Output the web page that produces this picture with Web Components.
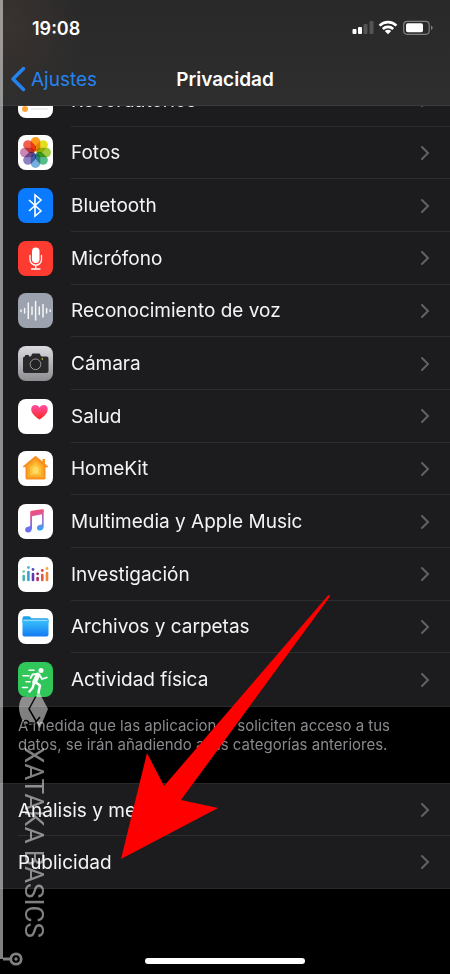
<!DOCTYPE html>
<html lang="es">
<head>
<meta charset="utf-8">
<meta name="viewport" content="width=device-width, initial-scale=1">
<title>Privacidad</title>
<style>
  body {
    margin: 0;
    background: #000;
    color: #f4f4f6;
    font-family: Inter, "Liberation Sans", sans-serif;
    font-size: 19px;
  }
</style>
</head>
<body>
<settings-screen>
  <nav-header slot="header" back="Ajustes">Privacidad</nav-header>

  <settings-list class="permissions" style="--inset: 71px">
    <settings-row>
      <svg slot="icon" viewBox="0 0 35 35"><rect width="35" height="35" rx="8" fill="#fff"/><circle cx="7" cy="26" r="3" fill="#f9a53a"/><circle cx="7" cy="17" r="3" fill="#3a8bf9"/><path d="M13 26h17M13 17h17" stroke="#ddd"/></svg>
      Recordatorios
    </settings-row>
    <settings-row>
      <svg slot="icon" viewBox="0 0 35 35">
        <rect width="35" height="35" rx="8" fill="#fff"/>
        <g style="isolation:isolate">
          <rect x="12.700" y="2" width="9.600" height="14.500" rx="4.800" fill="#fb9a1c" style="mix-blend-mode:multiply"/>
          <rect x="12.700" y="2" width="9.600" height="14.500" rx="4.800" fill="#e6dd1f" transform="rotate(45 17.5 17.5)" style="mix-blend-mode:multiply"/>
          <rect x="12.700" y="2" width="9.600" height="14.500" rx="4.800" fill="#a3cb3f" transform="rotate(90 17.5 17.5)" style="mix-blend-mode:multiply"/>
          <rect x="12.700" y="2" width="9.600" height="14.500" rx="4.800" fill="#58bd8c" transform="rotate(135 17.5 17.5)" style="mix-blend-mode:multiply"/>
          <rect x="12.700" y="2" width="9.600" height="14.500" rx="4.800" fill="#76aede" transform="rotate(180 17.5 17.5)" style="mix-blend-mode:multiply"/>
          <rect x="12.700" y="2" width="9.600" height="14.500" rx="4.800" fill="#8d83c3" transform="rotate(225 17.5 17.5)" style="mix-blend-mode:multiply"/>
          <rect x="12.700" y="2" width="9.600" height="14.500" rx="4.800" fill="#c987b4" transform="rotate(270 17.5 17.5)" style="mix-blend-mode:multiply"/>
          <rect x="12.700" y="2" width="9.600" height="14.500" rx="4.800" fill="#f0604d" transform="rotate(315 17.5 17.5)" style="mix-blend-mode:multiply"/>
        </g>
      </svg>
      Fotos
    </settings-row>
    <settings-row>
      <svg slot="icon" viewBox="0 0 35 35"><rect width="35" height="35" rx="8" fill="#0a7aff"/><path d="M11 12l12 11-6 5V7l6 5-12 11" fill="none" stroke="#fff" stroke-width="1.6"/></svg>
      Bluetooth
    </settings-row>
    <settings-row>
      <svg slot="icon" viewBox="0 0 35 35"><rect width="35" height="35" rx="8" fill="#fe3b30"/><rect x="14" y="6.500" width="7.500" height="15.500" rx="3.750" fill="#fff"/><path d="M12 14.500v4a5.750 5.750 0 0 0 11.500 0v-4M17.750 24.500v3.500M13.500 28h8.500" fill="none" stroke="#fff" stroke-width="1.300" stroke-linecap="round"/></svg>
      Micrófono
    </settings-row>
    <settings-row>
      <svg slot="icon" viewBox="0 0 35 35"><rect width="35" height="35" rx="8" fill="#9ca3ae"/><path d="M3 17v1.500M6.600 15.500v4.500M10.300 10v15.500M14 14v7.500M17.600 8.500v18.500M21.300 14v7.500M25 11.500v12.500M28.600 15.500v4.500M32.200 17v1.500" stroke="#f4f6f8" stroke-width="1.500" stroke-linecap="round"/></svg>
      Reconocimiento de voz
    </settings-row>
    <settings-row>
      <svg slot="icon" viewBox="0 0 35 35">
        <defs><linearGradient id="steel" x2="0" y2="1"><stop stop-color="#dcdbe0"/><stop offset="1" stop-color="#8d8c91"/></linearGradient></defs>
        <rect width="35" height="35" rx="8" fill="url(#steel)"/>
        <path d="M7 10.500v-.800q0-.700.700-.700h2.600q.700 0 .700.700v.800h1.200q.800 0 1.100-.800l.500-1.300q.300-.900 1.200-.900h6q.900 0 1.200.900l.500 1.300q.300.800 1.100.800H28.500q2 0 2 2v12.500q0 2-2 2H7q-2 0-2-2V12.500q0-2 2-2z" fill="#29292b"/>
        <circle cx="17.500" cy="18.300" r="5.300" fill="#222224" stroke="#9a9a96" stroke-width="1"/>
        <circle cx="24.300" cy="13" r=".8" fill="#f4cf2e"/>
      </svg>
      Cámara
    </settings-row>
    <settings-row>
      <svg slot="icon" viewBox="0 0 35 35">
        <defs><linearGradient id="heart" x2="0" y2="1"><stop stop-color="#fd50a5"/><stop offset="1" stop-color="#fb2721"/></linearGradient></defs>
        <rect width="35" height="35" rx="8" fill="#fff"/>
        <path d="M21.500 20.500C17 17.500 13.200 14.300 13.200 10.200 13.200 7.600 15 6 17.200 6c1.900 0 3.400 1 4.300 2.700C22.400 7 23.900 6 25.700 6c2.300 0 4 1.600 4 4.200 0 4.100-3.700 7.300-8.200 10.300z" fill="url(#heart)"/>
      </svg>
      Salud
    </settings-row>
    <settings-row>
      <svg slot="icon" viewBox="0 0 35 35">
        <rect width="35" height="35" rx="8" fill="#fff"/>
        <path d="M17.500 4.700L5 15.200v1h2.500V27q0 1.500 1.500 1.500h17q1.500 0 1.500-1.500V16.200H30v-1l-3-2.500V8h-2.500v2.600z" fill="#f98f1d"/>
        <path d="M17.500 8L9.500 14.500V26.500h16V14.500z" fill="#fba927"/>
        <path d="M17.500 11.500L12 16v8.500h11V16z" fill="#fdc23c"/>
        <path d="M17.500 15l-3 2.400v5h6v-5z" fill="#ffdb63"/>
      </svg>
      HomeKit
    </settings-row>
    <settings-row>
      <svg slot="icon" viewBox="0 0 35 35">
        <defs><linearGradient id="note" x1=".3" y1="0" x2=".5" y2="1"><stop stop-color="#fb4e6b"/><stop offset=".35" stop-color="#d957a0"/><stop offset=".7" stop-color="#7a70ea"/><stop offset="1" stop-color="#5c6df4"/></linearGradient>
        <linearGradient id="stem" x2="0" y2="1"><stop stop-color="#f64f75"/><stop offset=".5" stop-color="#9d73d8"/><stop offset="1" stop-color="#2ba8f8"/></linearGradient></defs>
        <rect width="35" height="35" rx="8" fill="#fff"/>
        <path d="M12.200 8.500q0-1.400 1.300-1.700L24 5.200q1.700-.300 1.700 1.200l-1.500 3.800-10.200 2v11.600c0 2.900-1.500 4.700-3.800 4.700-1.900 0-3.100-1.100-3.100-2.700 0-1.700 1.200-2.800 2.900-3.100 1.500-.300 2.200-.500 2.200-1.700z" fill="url(#note)"/>
        <path d="M24 5.600l1.700.200v16.400c0 2.800-1.500 4.400-3.800 4.400-1.900 0-3-1.100-3-2.700 0-1.700 1.200-2.700 2.800-3 1.500-.300 2.300-.500 2.300-1.700z" fill="url(#stem)"/>
      </svg>
      Multimedia y Apple Music
    </settings-row>
    <settings-row>
      <svg slot="icon" viewBox="0 0 35 35">
        <rect width="35" height="35" rx="8" fill="#fff"/>
        <g stroke-width="2.600" stroke-linecap="round">
          <path d="M5.700 19v4" stroke="#4eb6a5"/><path d="M10.400 15v8" stroke="#3d9fd6"/><path d="M15 17v6" stroke="#6238b0"/><path d="M19.600 21v2" stroke="#b02a65"/><path d="M24.300 18v5" stroke="#e15a3d"/><path d="M29 16v7" stroke="#ee8434"/>
        </g>
        <circle cx="5.700" cy="14.500" r="1.300" fill="#68c796"/><circle cx="10.400" cy="10.500" r="1.400" fill="#4ab7e4"/><circle cx="15" cy="12.500" r="1.400" fill="#4d4fc5"/><circle cx="19.600" cy="16.800" r="1.400" fill="#8f2365"/><circle cx="24.300" cy="13.500" r="1.400" fill="#d3454a"/><circle cx="29" cy="11.500" r="1.400" fill="#f6ac39"/>
      </svg>
      Investigación
    </settings-row>
    <settings-row>
      <svg slot="icon" viewBox="0 0 35 35">
        <defs><linearGradient id="folder" x2="0" y2="1"><stop stop-color="#39c1fb"/><stop offset="1" stop-color="#147bf3"/></linearGradient></defs>
        <rect width="35" height="35" rx="8" fill="#fff"/>
        <path d="M4.500 9q0-1.700 1.700-1.700h4.600q1 0 1.600.7l.6.700q.4.500 1.200.500H29q1.500 0 1.500 1.500V14h-26z" fill="#20a0e8"/>
        <path d="M4.500 11h26v14.500q0 2-2 2h-22q-2 0-2-2z" fill="url(#folder)"/>
        <path d="M5.500 11.200h24" stroke="#c6ecff" stroke-width=".9"/>
      </svg>
      Archivos y carpetas
    </settings-row>
    <settings-row>
      <svg slot="icon" viewBox="0 0 35 35">
        <rect width="35" height="35" rx="8" fill="#30c659"/>
        <circle cx="23" cy="8.500" r="2.500" fill="#fff"/>
        <g fill="none" stroke="#fff" stroke-linecap="round" stroke-linejoin="round">
          <path d="M20 13l-3.500 7" stroke-width="4.600"/>
          <path d="M19 12l-4.500.5-2 3.500M21.500 13l2.500 4 4.800-1.500" stroke-width="1.800"/>
          <path d="M18 20.500l4 3-1.500 7M16 21l-1.500 5-3 3.500" stroke-width="2.500"/>
          <path d="M11 8.300h5M5 13.800h6M8 19.700h4M4.500 25.500h5" stroke-width="1.500"/>
        </g>
      </svg>
      Actividad física
    </settings-row>
  </settings-list>

  <group-note>A medida que las aplicaciones soliciten acceso a tus datos, se irán añadiendo a las categorías anteriores.</group-note>

  <settings-list style="--inset: 18px">
    <settings-row>Análisis y mejoras</settings-row>
    <settings-row>Publicidad</settings-row>
  </settings-list>

  <home-indicator></home-indicator>

  <brand-mark slot="overlay">XATAKA BASICS</brand-mark>
  <callout-arrow slot="overlay"></callout-arrow>
</settings-screen>

<script>
class SettingsScreen extends HTMLElement {
  constructor() {
    super();
    this.attachShadow({mode: 'open'}).innerHTML = `
      <style>
        :host {
          display: flex;
          flex-direction: column;
          position: relative;
          min-height: 100vh;
          overflow: hidden;
        }
        main {
          flex: 1;
          display: flex;
          flex-direction: column;
          /* the list is scrolled partly under the header */
          margin-top: -33px;
        }
        ::slotted(.permissions) {
          flex: 1;
        }
      </style>
      <slot name="header"></slot>
      <main><slot></slot></main>
      <slot name="overlay"></slot>
    `;
  }
}

class StatusBar extends HTMLElement {
  constructor() {
    super();
    this.attachShadow({mode: 'open'}).innerHTML = `
      <style>
        :host {
          display: flex;
          align-items: center;
          justify-content: space-between;
          height: 56px;
          padding: 0 16px 0 32px;
          color: #fff;
          font-size: 18px;
          font-weight: 600;
        }
        svg {
          display: block;
        }
      </style>
      <time><slot></slot></time>
      <svg width="82" height="16" viewBox="0 0 82 16" aria-hidden="true">
        <rect x="0.500" y="9" width="4" height="5" rx="1" fill="#fff"/>
        <rect x="6" y="7" width="4" height="7" rx="1" fill="#fff"/>
        <rect x="11.500" y="4" width="4" height="10" rx="1" fill="#555556"/>
        <rect x="17.500" y="1" width="4" height="13" rx="1" fill="#555556"/>
        <g fill="none" stroke="#fff" stroke-width="2.600">
          <path d="M27.600 5.600a12 12 0 0 1 16.800 0"/>
          <path d="M30.800 9a7.500 7.500 0 0 1 10.400 0"/>
        </g>
        <path d="M36 14.300l-3.200-3.200a4.500 4.500 0 0 1 6.400 0z" fill="#fff"/>
        <rect x="51.700" y="1.300" width="25.500" height="13" rx="3.500" fill="none" stroke="#808081" stroke-width="1.200"/>
        <rect x="54" y="3.300" width="17" height="9" rx="1.800" fill="#fff"/>
        <path d="M79 5.500q1.700.800 1.700 2.300T79 10z" fill="#808081"/>
      </svg>
    `;
  }
}

class NavHeader extends HTMLElement {
  constructor() {
    super();
    this.attachShadow({mode: 'open'}).innerHTML = `
      <style>
        :host {
          display: block;
          position: relative;
          z-index: 1;
          box-sizing: border-box;
          height: 106px;
          background:
            radial-gradient(circle at 0 24px, #3b3330, transparent 84px),
            linear-gradient(#292929, #2e2e2e);
          border-bottom: 1px solid #3a3a3b;
        }
        nav {
          display: grid;
          grid-template-columns: 1fr auto 1fr;
          align-items: center;
          height: 46px;
          padding: 0 10px;
        }
        a {
          display: flex;
          align-items: center;
          gap: 5px;
          color: #2583ee;
          text-decoration: none;
        }
        h1 {
          margin: 0;
          color: #fff;
          font-size: 19px;
          font-weight: 600;
        }
      </style>
      <status-bar>19:08</status-bar>
      <nav>
        <a href="#"><svg width="16" height="26" viewBox="0 0 16 26" aria-hidden="true"><path d="M13.500 2.500L3 13l10.500 10.500" fill="none" stroke="currentColor" stroke-width="3.500" stroke-linecap="round" stroke-linejoin="round"/></svg><span>${this.getAttribute('back')}</span></a>
        <h1><slot></slot></h1>
      </nav>
    `;
  }
}

class SettingsList extends HTMLElement {
  constructor() {
    super();
    this.attachShadow({mode: 'open'}).innerHTML = `
      <style>
        :host {
          display: grid;
          grid-auto-rows: 1fr;
          background: #1c1c1e;
          border: solid #29292b;
          border-width: 1px 0;
        }
        ::slotted(:last-child) {
          --line: transparent;
        }
      </style>
      <slot></slot>
    `;
  }
}

class SettingsRow extends HTMLElement {
  constructor() {
    super();
    this.attachShadow({mode: 'open'}).innerHTML = `
      <style>
        :host {
          display: block;
          min-height: 52px;
        }
        a {
          display: flex;
          align-items: center;
          gap: 18px;
          box-sizing: border-box;
          height: 100%;
          padding: 0 20px 0 18px;
          background: linear-gradient(var(--line, #2d2d2f) 0 0) var(--inset) 100% / 100% 1px no-repeat;
          color: inherit;
          text-decoration: none;
        }
        ::slotted(svg) {
          flex: none;
          width: 35px;
          height: 35px;
        }
        span {
          flex: 1;
        }
      </style>
      <a href="#">
        <slot name="icon"></slot>
        <span><slot></slot></span>
        <svg width="10" height="16" viewBox="0 0 10 16" aria-hidden="true"><path d="M2 2l6 6-6 6" fill="none" stroke="#626266" stroke-width="2" stroke-linecap="round"/></svg>
      </a>
    `;
  }
}

class GroupNote extends HTMLElement {
  constructor() {
    super();
    this.attachShadow({mode: 'open'}).innerHTML = `
      <style>
        :host {
          display: block;
          padding: 9px 36px 29px 18px;
          color: #8a8a8e;
        }
        p {
          margin: 0;
          font-size: 15px;
          line-height: 19px;
        }
      </style>
      <p><slot></slot></p>
    `;
  }
}

class HomeIndicator extends HTMLElement {
  constructor() {
    super();
    this.attachShadow({mode: 'open'}).innerHTML = `
      <style>
        :host {
          display: flex;
          justify-content: center;
          padding: 69px 0 10px;
        }
        div {
          width: 160px;
          height: 6px;
          border-radius: 3px;
          background: #fff;
        }
      </style>
      <div></div>
    `;
  }
}

class BrandMark extends HTMLElement {
  constructor() {
    super();
    this.attachShadow({mode: 'open'}).innerHTML = `
      <style>
        :host {
          position: absolute;
          inset: 0 auto 8px 0;
          z-index: 2;
          display: flex;
          flex-direction: column;
          justify-content: flex-end;
          width: 50px;
          color: #fff;
          opacity: .5;
          pointer-events: none;
        }
        .rail {
          position: absolute;
          inset: 0 auto 7px 0;
          width: 3px;
          background: currentColor;
        }
        .logo {
          margin-left: 18px;
        }
        .name {
          margin: 16px 0 14px 17px;
          writing-mode: vertical-rl;
          font: 26px/32px Roboto, sans-serif;
        }
      </style>
      <div class="rail"></div>
      <svg class="logo" width="32" height="40" viewBox="0 0 32 40" aria-hidden="true">
        <path d="M21 1l9 17-8 19-4-5-6 2-6-2Q-3 17 4 6h13z" fill="currentColor"/>
        <path d="M18 5l-7 13 7 12M11 32h6l5-6M18 30l1 5" fill="none" stroke="#000" stroke-width="1.500"/>
        <circle cx="8" cy="32" r="2.500" fill="none" stroke="#000" stroke-width="1.500"/>
      </svg>
      <span class="name"><slot></slot></span>
      <svg width="24" height="14" viewBox="0 0 24 14" aria-hidden="true">
        <path d="M3 7h8" stroke="currentColor" stroke-width="3"/>
        <circle cx="16" cy="7" r="5.200" fill="none" stroke="currentColor" stroke-width="2.800"/>
        <circle cx="16" cy="7" r="1.700" fill="currentColor"/>
      </svg>
    `;
  }
}

class CalloutArrow extends HTMLElement {
  constructor() {
    super();
    this.attachShadow({mode: 'open'}).innerHTML = `
      <style>
        :host {
          position: absolute;
          left: 120px;
          bottom: 114px;
          z-index: 3;
          pointer-events: none;
        }
        svg {
          display: block;
        }
      </style>
      <svg width="212" height="266" viewBox="0 0 212 266" aria-hidden="true">
        <path d="M1 265L27 159l17 33L208 1.500q2-1 2 1L61 206l37 8z" fill="#fe0000"/>
      </svg>
    `;
  }
}

customElements.define('settings-screen', SettingsScreen);
customElements.define('status-bar', StatusBar);
customElements.define('nav-header', NavHeader);
customElements.define('settings-list', SettingsList);
customElements.define('settings-row', SettingsRow);
customElements.define('group-note', GroupNote);
customElements.define('home-indicator', HomeIndicator);
customElements.define('brand-mark', BrandMark);
customElements.define('callout-arrow', CalloutArrow);
</script>
</body>
</html>
